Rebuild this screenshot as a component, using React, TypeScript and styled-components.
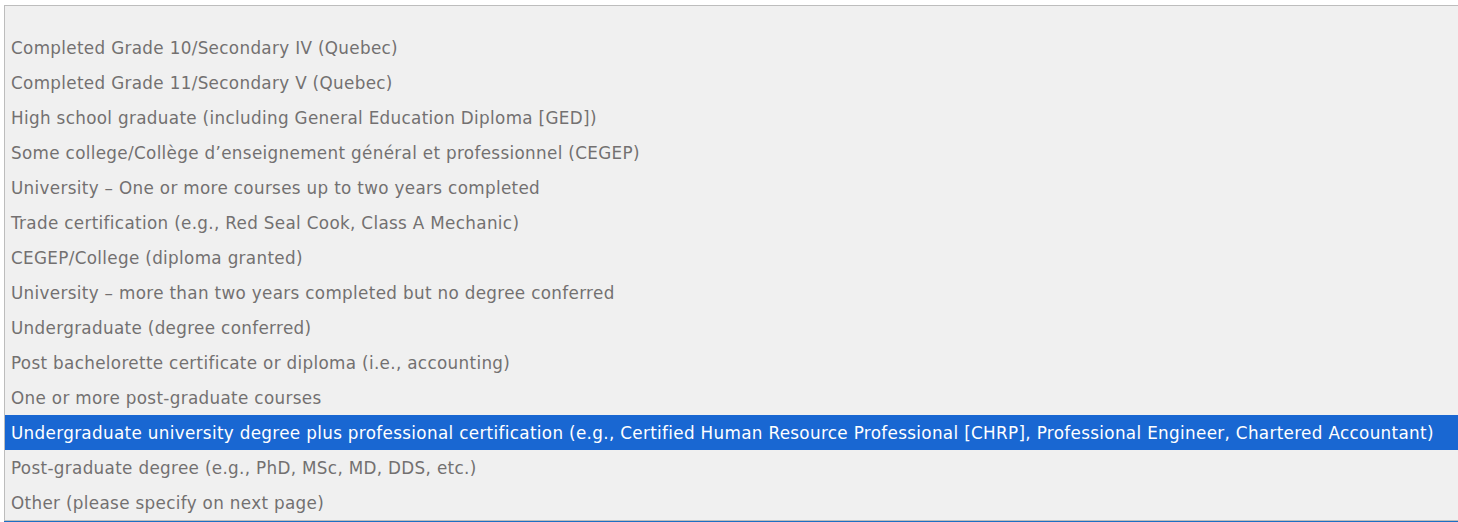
import styled, { createGlobalStyle } from "styled-components";

const GlobalStyle = createGlobalStyle`
  html, body {
    margin: 0;
    padding: 0;
    background: #ffffff;
    overflow: hidden;
  }
`;

const Page = styled.div`
  width: 1458px;
  height: 522px;
  padding: 5px 0 0 4px;
  box-sizing: border-box;
  overflow: hidden;
`;

const ListBox = styled.ul`
  list-style: none;
  margin: 0;
  padding: 24px 0 0 0;
  width: 1470px;
  box-sizing: border-box;
  background: #f0f0f0;
  border: 1px solid #bdbdbd;
  box-shadow: 0 1px 0 #1c6fc4;
  display: flex;
  flex-direction: column;
`;

interface OptionProps {
  selected?: boolean;
}

const Option = styled.li<OptionProps>`
  height: 35px;
  display: flex;
  align-items: center;
  padding: 0 0 0 6px;
  font-family: "DejaVu Sans", "Open Sans", sans-serif;
  font-size: 16.8px;
  letter-spacing: 0.33px;
  white-space: nowrap;
  color: ${(props) => (props.selected ? "#ffffff" : "#737070")};
  background: ${(props) => (props.selected ? "#1967d2" : "transparent")};
`;

const options = [
  "Completed Grade 10/Secondary IV (Quebec)",
  "Completed Grade 11/Secondary V (Quebec)",
  "High school graduate (including General Education Diploma [GED])",
  "Some college/Collège d’enseignement général et professionnel (CEGEP)",
  "University – One or more courses up to two years completed",
  "Trade certification (e.g., Red Seal Cook, Class A Mechanic)",
  "CEGEP/College (diploma granted)",
  "University – more than two years completed but no degree conferred",
  "Undergraduate (degree conferred)",
  "Post bachelorette certificate or diploma (i.e., accounting)",
  "One or more post-graduate courses",
  "Undergraduate university degree plus professional certification (e.g., Certified Human Resource Professional [CHRP], Professional Engineer, Chartered Accountant)",
  "Post-graduate degree (e.g., PhD, MSc, MD, DDS, etc.)",
  "Other (please specify on next page)",
];

const SELECTED = 11;

export default function App() {
  return (
    <>
      <GlobalStyle />
      <Page>
        <ListBox>
          {options.map((label, i) => (
            <Option key={label} selected={i === SELECTED}>
              {label}
            </Option>
          ))}
        </ListBox>
      </Page>
    </>
  );
}
